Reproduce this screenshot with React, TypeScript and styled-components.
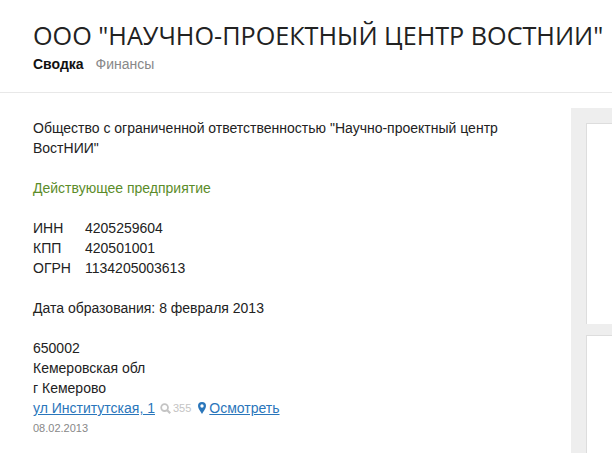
import React from 'react';
import styled, { createGlobalStyle } from 'styled-components';

const GlobalStyle = createGlobalStyle`
  html, body {
    margin: 0;
    padding: 0;
    background: #fff;
    overflow: hidden;
  }
  body {
    font-family: "Liberation Sans", Arial, sans-serif;
    font-size: 14px;
    line-height: 20px;
    color: #222;
  }
`;

const Page = styled.div`
  width: 612px;
  height: 453px;
  overflow: hidden;
`;

const Header = styled.header`
  height: 74px;
  padding: 18px 0 0 33px;
  border-bottom: 1px solid #e8e8e8;
`;

const Title = styled.h1`
  margin: 0;
  font-family: "Open Sans", sans-serif;
  font-weight: 400;
  font-size: 25.2px;
  line-height: 34px;
  color: #222;
  white-space: nowrap;
`;

const Tabs = styled.nav`
  display: flex;
  gap: 12px;
  margin-top: 2px;
`;

const Tab = styled.span<{ $active?: boolean }>`
  font-weight: ${p => (p.$active ? 700 : 400)};
  color: ${p => (p.$active ? '#111' : '#888')};
`;

const Body = styled.div`
  display: flex;
  align-items: flex-start;
`;

const Main = styled.main`
  width: 505px;
  padding: 25px 33px 0 33px;
  flex: none;
`;

const Block = styled.p`
  margin: 0 0 20px;
`;

const Status = styled(Block)`
  color: #5b8c2a;
`;

const CodeRow = styled.div`
  display: flex;
`;

const CodeLabel = styled.span`
  width: 52px;
`;

const AddressRow = styled.div`
  display: flex;
  align-items: center;
  white-space: nowrap;
`;

const DocLink = styled.a`
  color: #2a76bb;
  text-decoration: underline;
`;

const Views = styled.span`
  display: inline-flex;
  align-items: center;
  gap: 2px;
  margin: 0 7px 0 5px;
  font-size: 11px;
  color: #c4c4c4;
`;

const Pin = styled.span`
  display: inline-flex;
  margin-right: 3px;
`;

const DateNote = styled.div`
  font-size: 11px;
  color: #888;
`;

const Sidebar = styled.aside`
  flex: 1;
  margin-top: 15px;
  height: 400px;
  background: #eee;
  padding: 15px 0 0 15px;
  display: flex;
  flex-direction: column;
  gap: 11px;
  box-sizing: border-box;
  min-width: 0;
`;

const Card = styled.div<{ $height: number }>`
  height: ${p => p.$height}px;
  background: #fff;
  border-left: 1px solid #ddd;
  border-top: 1px solid #ddd;
  box-sizing: border-box;
  flex: none;
`;

const App = () => (
  <Page>
    <GlobalStyle />
    <Header>
      <Title>ООО "НАУЧНО-ПРОЕКТНЫЙ ЦЕНТР ВОСТНИИ"</Title>
      <Tabs>
        <Tab $active>Сводка</Tab>
        <Tab>Финансы</Tab>
      </Tabs>
    </Header>
    <Body>
      <Main>
        <Block>Общество с ограниченной ответственностью "Научно-проектный центр ВостНИИ"</Block>
        <Status>Действующее предприятие</Status>
        <Block as="div">
          <CodeRow><CodeLabel>ИНН</CodeLabel>4205259604</CodeRow>
          <CodeRow><CodeLabel>КПП</CodeLabel>420501001</CodeRow>
          <CodeRow><CodeLabel>ОГРН</CodeLabel>1134205003613</CodeRow>
        </Block>
        <Block>Дата образования: 8 февраля 2013</Block>
        <div>650002</div>
        <div>Кемеровская обл</div>
        <div>г Кемерово</div>
        <AddressRow>
          <DocLink href="#">ул Институтская, 1</DocLink>
          <Views>
            <svg width="11" height="11" viewBox="0 0 11 11" fill="none" stroke="#c4c4c4">
              <circle cx="4.6" cy="4.6" r="3.4" strokeWidth="1.8" />
              <path d="M7 7 10.200 10.200" strokeWidth="2.200" />
            </svg>
            355
          </Views>
          <Pin>
            <svg width="8" height="12" viewBox="0 0 8 12">
              <path
                fillRule="evenodd"
                fill="#2a76bb"
                d="M4 0a4 4 0 0 1 4 4c0 2.4-2.6 5.6-4 8C2.600 9.600 0 6.400 0 4a4 4 0 0 1 4-4Zm0 2.300a1.700 1.700 0 1 0 0 3.400 1.700 1.700 0 0 0 0-3.400Z"
              />
            </svg>
          </Pin>
          <DocLink href="#">Осмотреть</DocLink>
        </AddressRow>
        <DateNote>08.02.2013</DateNote>
      </Main>
      <Sidebar>
        <Card $height={201} />
        <Card $height={200} />
      </Sidebar>
    </Body>
  </Page>
);

export default App;
